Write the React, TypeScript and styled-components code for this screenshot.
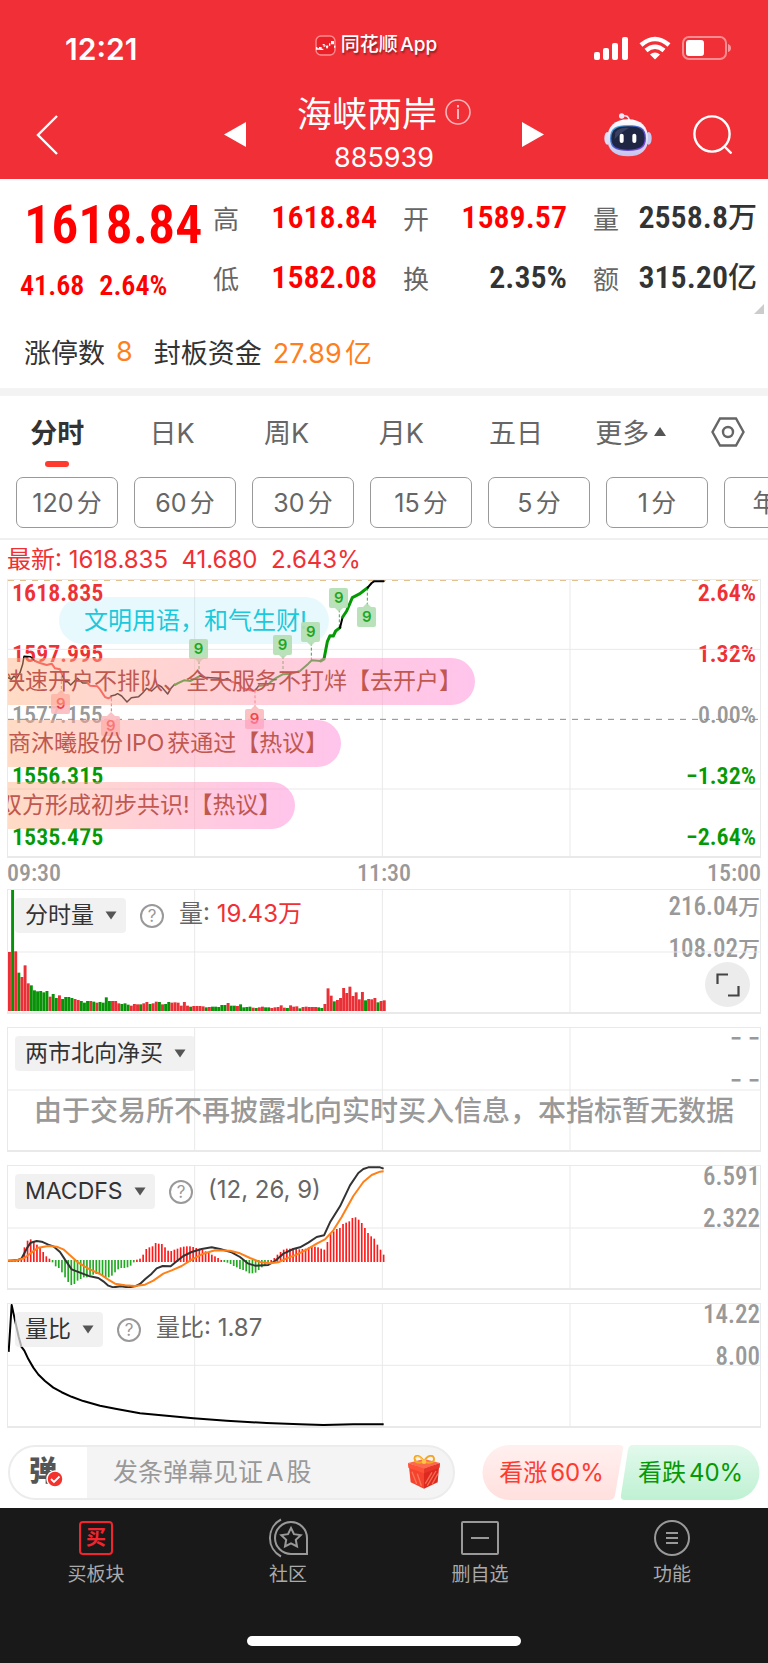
import React from 'react';
import styled, { createGlobalStyle, css } from 'styled-components';

const sans = `Inter, "Noto Sans CJK SC", sans-serif`;
const narrow = `"Roboto Condensed", "Liberation Sans Narrow", "Noto Sans CJK SC", sans-serif`;
const c = {
  brand: '#f12f37',
  up: '#f00',
  chartUp: '#ef3034',
  down: '#059a05',
  ink: '#333',
  mid: '#666',
  soft: '#999',
  line: '#e9e9e9',
  orange: '#ff7f1f',
};

const GlobalStyle = createGlobalStyle`
  * { box-sizing: border-box; }
  body { margin: 0; background: #fff; font-family: ${sans}; color: ${c.ink}; }
  button { border: 0; padding: 0; margin: 0; background: none; font: inherit; color: inherit; cursor: pointer; }
  svg { display: block; flex: none; }
`;

const autospace = css`
  text-autospace: normal;
`;

const Page = styled.div`
  display: flex;
  flex-direction: column;
  min-height: 100vh;
  overflow: hidden;
`;

/* ---------- header ---------- */
const Header = styled.header`
  background: ${c.brand};
  color: #fff;
  height: 179px;
`;
const StatusBar = styled.div`
  display: grid;
  grid-template-columns: 1fr auto 1fr;
  align-items: center;
  height: 90px;
  padding: 6px 37px 0 65px;
`;
const Clock = styled.span`
  font-size: 30px;
  font-weight: 600;
  line-height: 40px;
  padding-top: 2px;
`;
const AppName = styled.span`
  display: flex;
  align-items: center;
  gap: 5px;
  font-size: 19px;
  line-height: 24px;
  padding-bottom: 6px;
  margin-right: 44px;
  font-weight: 500;
  text-shadow: 1px 2px 2px rgba(0, 0, 0, 0.4);
  ${autospace}
`;
const StatusIcons = styled.div`
  display: flex;
  gap: 11px;
  justify-content: flex-end;
  align-items: center;
`;
const NavRow = styled.div`
  display: grid;
  grid-template-columns: 1fr 320px 1fr;
  align-items: center;
  height: 89px;
  padding: 0 36px;
`;
const BackCell = styled.div`
  display: flex;
  align-items: center;
`;
const Switcher = styled.div`
  display: flex;
  align-items: center;
  justify-content: space-between;
`;
const TitleBlock = styled.div`
  display: flex;
  flex-direction: column;
  align-items: center;
  gap: 2px;
`;
const TitleLine = styled.h1`
  display: flex;
  align-items: center;
  gap: 8px;
  margin: 0;
  font-size: 35px;
  font-weight: 400;
  line-height: 44px;
  svg { margin-top: -4px; }
`;
const Code = styled.span`
  font-size: 27px;
  line-height: 40px;
`;
const Actions = styled.div`
  display: flex;
  justify-content: flex-end;
  align-items: center;
  gap: 41px;
`;

/* ---------- quote ---------- */
const Quote = styled.section`
  display: grid;
  grid-template-columns: 205px 164px 190px 1fr;
  padding: 8px 11px 0 8px;
  position: relative;
  height: 144px;
`;
const PriceCell = styled.div`
  display: flex;
  flex-direction: column;
  padding-top: 4px;
  font-family: ${narrow};
  font-weight: 600;
  color: ${c.up};
`;
const Price = styled.span`
  font-size: 54px;
  line-height: 68px;
  padding-left: 16px;
`;
const Change = styled.span`
  display: flex;
  gap: 15px;
  font-size: 28px;
  line-height: 54px;
  padding-left: 12px;
`;
const StatColumn = styled.dl`
  display: flex;
  flex-direction: column;
  margin: 0;
  padding-left: 26px;
  &:first-of-type { padding-left: 0; }
`;
const Stat = styled.div`
  display: flex;
  justify-content: space-between;
  align-items: center;
  height: 60px;
`;
const StatLabel = styled.dt`
  font-size: 26px;
  color: ${c.mid};
`;
const StatValue = styled.dd<{ $up?: boolean }>`
  margin: 0;
  font-family: ${narrow};
  font-size: 32px;
  line-height: 40px;
  font-weight: 600;
  color: ${(p) => (p.$up ? c.up : c.ink)};
`;
const Unit = styled.span<{ $size: number }>`
  font-family: "Noto Sans CJK SC", sans-serif;
  font-size: ${(p) => p.$size}px;
  font-weight: 500;
  line-height: 1;
`;
const Corner = styled.i`
  position: absolute;
  right: 4px;
  bottom: 9px;
  border-left: 10px solid transparent;
  border-bottom: 10px solid #ccc;
`;
const LimitRow = styled.div`
  display: flex;
  align-items: center;
  height: 73px;
  padding: 0 24px 8px;
  margin-bottom: -8px;
  font-size: 27px;
  border-bottom: 8px solid #f3f3f3;
  gap: 11px;
  ${autospace}
  & > span:nth-child(2) { margin-right: 10px; }
`;
const Orange = styled.span`
  color: ${c.orange};
`;

/* ---------- tabs ---------- */
const Tabs = styled.nav`
  display: grid;
  grid-template-columns: repeat(6, 1fr) 80px;
  align-items: start;
  height: 73px;
  margin-top: 8px;
`;
const Tab = styled.button<{ $active?: boolean }>`
  display: flex;
  justify-content: center;
  align-items: center;
  gap: 5px;
  position: relative;
  height: 71px;
  font-size: 27px;
  color: ${(p) => (p.$active ? c.ink : c.mid)};
  font-weight: ${(p) => (p.$active ? 700 : 400)};
  ${(p) => p.$active && css`
    &::after {
      content: '';
      position: absolute;
      left: calc(50% - 12px);
      bottom: 0;
      width: 24px;
      height: 6px;
      border-radius: 3px;
      background: #ff3b30;
    }
  `}
`;
const Chips = styled.div`
  display: flex;
  gap: 16px;
  padding: 8px 0 10px 16px;
  overflow: hidden;
  border-bottom: 2px solid #f0f0f0;
`;
const Chip = styled.button`
  flex: none;
  width: 102px;
  height: 51px;
  padding-bottom: 3px;
  border: 1px solid #999;
  border-radius: 7px;
  font-size: 25px;
  color: ${c.mid};
  ${autospace}
`;

/* ---------- charts ---------- */
const Charts = styled.main`
  padding: 0 7px;
`;
const Latest = styled.p`
  margin: 0;
  height: 39px;
  font-size: 24px;
  line-height: 40px;
  color: ${c.chartUp};
  white-space: pre;
`;
const Panel = styled.section<{ $main?: boolean }>`
  position: relative;
  height: ${(p) => (p.$main ? 279 : 125)}px;
  border: 1px solid ${c.line};
  border-bottom-width: 2px;
  overflow: hidden;
  & + & { margin-top: 13px; }
`;
const Plot = styled.svg`
  position: absolute;
  inset: 0;
  width: 100%;
  height: 100%;
  & * { vector-effect: non-scaling-stroke; }
`;
const Axis = styled.ul<{ $right?: boolean; $top?: number; $step: number }>`
  position: absolute;
  top: ${(p) => p.$top ?? 0}px;
  ${(p) => (p.$right ? 'right: 0; text-align: right;' : 'left: 0;')}
  margin: 0;
  padding: 0;
  list-style: none;
  font-family: ${narrow};
  font-size: 25px;
  font-weight: 500;
  line-height: ${(p) => p.$step}px;
  color: ${c.soft};
`;
const Tick = styled.li<{ $tone: 'up' | 'flat' | 'down' }>`
  padding: 0 4px;
  font-size: 24px;
  font-weight: ${(p) => (p.$tone === 'flat' ? 500 : 600)};
  color: ${(p) => ({ up: c.chartUp, flat: c.soft, down: c.down })[p.$tone]};
`;
const TimeRow = styled.div`
  display: flex;
  justify-content: space-between;
  height: 31px;
  font-family: ${narrow};
  font-size: 24px;
  font-weight: 500;
  line-height: 31px;
  color: ${c.soft};
`;
const Marker = styled.span<{ $green?: boolean; $above?: boolean }>`
  position: absolute;
  width: 19px;
  height: 20px;
  margin: -10px 0 0 -10px;
  border-radius: 2px;
  font-size: 15px;
  font-weight: 600;
  line-height: 20px;
  text-align: center;
  color: ${(p) => (p.$green ? '#0a9d0a' : '#f3323a')};
  background: ${(p) => (p.$green ? '#b3dfb3' : '#fbbcbf')};
  opacity: 0.9;
  &::after {
    content: '';
    position: absolute;
    left: 6px;
    ${(p) => (p.$above ? 'bottom: 100%; border-bottom: 4px solid;' : 'top: 100%; border-top: 4px solid;')}
    border-left: 4px solid transparent;
    border-right: 4px solid transparent;
    border-top-color: ${(p) => (p.$above ? 'transparent' : p.$green ? '#b3dfb3' : '#fbbcbf')};
    border-bottom-color: ${(p) => (p.$green ? '#b3dfb3' : '#fbbcbf')};
  }
`;
const Barrage = styled.div`
  position: absolute;
  top: 78px;
  left: 0;
  display: flex;
  flex-direction: column;
  align-items: flex-start;
  gap: 15px;
`;
const Bullet = styled.a<{ $shift?: number }>`
  height: 47px;
  padding-right: 13px;
  border-radius: 0 24px 24px 0;
  background: linear-gradient(90deg, rgba(255, 178, 130, 0.46), rgba(255, 150, 220, 0.56));
  color: #c05850;
  font-size: 23px;
  line-height: 47px;
  text-decoration: none;
  white-space: pre;
  text-indent: ${(p) => p.$shift ?? 0}px;
  ${autospace}
`;
const Notice = styled.div`
  position: absolute;
  left: 51px;
  top: 17px;
  width: 270px;
  height: 47px;
  padding-left: 25px;
  border-radius: 24px;
  background: rgba(20, 200, 225, 0.1);
  color: #1ac9dc;
  font-size: 24px;
  line-height: 47px;
  white-space: nowrap;
`;
const PanelHead = styled.div`
  position: absolute;
  left: 7px;
  top: 8px;
  display: flex;
  align-items: center;
  height: 35px;
  font-size: 24px;
  line-height: 32px;
  color: ${c.mid};
  white-space: pre;
  & > span { padding-bottom: 4px; }
`;
const Picker = styled.label`
  position: relative;
  display: flex;
  align-items: center;
  height: 35px;
  margin-right: 14px;
  border-radius: 4px;
  background: rgba(236, 236, 236, 0.72);
  svg { position: absolute; right: 9px; pointer-events: none; }
`;
const PickerSelect = styled.select`
  appearance: none;
  border: 0;
  margin: 0;
  height: 35px;
  padding: 0 32px 2px 10px;
  background: none;
  font-family: ${sans};
  font-size: 23px;
  color: ${c.ink};
`;
const HelpButton = styled.button`
  display: flex;
  align-items: center;
  justify-content: center;
  width: 24px;
  height: 24px;
  border: 2px solid ${c.soft};
  border-radius: 50%;
  margin-right: 15px;
  font-size: 17px;
  line-height: 20px;
  color: ${c.soft};
`;
const Red = styled.span`
  color: ${c.chartUp};
`;
const Empty = styled.p`
  position: absolute;
  left: 0;
  right: 0;
  top: 62px;
  margin: 0;
  text-align: center;
  font-size: 28px;
  line-height: 42px;
  color: ${c.soft};
  font-weight: 500;
  white-space: nowrap;
`;
const Expand = styled.button`
  position: absolute;
  right: 10px;
  bottom: 5px;
  display: flex;
  align-items: center;
  justify-content: center;
  width: 45px;
  height: 45px;
  border-radius: 50%;
  background: #ececec;
`;

/* ---------- comment bar ---------- */
const CommentBar = styled.div`
  display: flex;
  align-items: center;
  justify-content: space-between;
  gap: 27px;
  height: 80px;
  padding: 8px 8px 0;
`;
const Composer = styled.form`
  display: flex;
  align-items: center;
  flex: 1;
  height: 55px;
  padding-right: 13px;
  border: 2px solid #ececec;
  border-radius: 28px;
  background: #f4f4f4;
  overflow: hidden;
`;
const BarrageToggle = styled.button`
  position: relative;
  width: 77px;
  height: 51px;
  background: #fff;
  font-size: 28px;
  font-weight: 900;
  color: #555;
  text-align: left;
  padding: 0 0 6px 19px;
  svg { position: absolute; left: 36px; top: 23px; }
`;
const CommentInput = styled.input`
  flex: 1;
  min-width: 0;
  border: 0;
  padding: 0 0 0 26px;
  background: none;
  font-family: ${sans};
  font-size: 25px;
  color: ${c.ink};
  ${autospace}
  &::placeholder { color: ${c.soft}; opacity: 1; }
`;
const Votes = styled.div`
  display: flex;
  width: 278px;
`;
const Vote = styled.button<{ $rise?: boolean }>`
  position: relative;
  flex: 1;
  height: 55px;
  padding-bottom: 3px;
  font-size: 24px;
  color: ${(p) => (p.$rise ? '#ff3b30' : c.down)};
  ${autospace}
  svg { position: absolute; inset: 0; width: 100%; overflow: visible; }
  span { position: relative; }
`;

/* ---------- bottom nav ---------- */
const Footer = styled.footer`
  flex: 1;
  display: flex;
  flex-direction: column;
  justify-content: space-between;
  align-items: center;
  min-height: 155px;
  padding-bottom: 17px;
  background: #191919;
`;
const FooterItems = styled.nav`
  display: grid;
  grid-template-columns: repeat(4, 1fr);
  width: 100%;
  padding-top: 10px;
`;
const FooterItem = styled.button`
  display: flex;
  flex-direction: column;
  align-items: center;
  gap: 3px;
  font-size: 19px;
  line-height: 28px;
  color: #aaa;
`;
const BuyIcon = styled.span`
  display: flex;
  align-items: center;
  justify-content: center;
  width: 34px;
  height: 34px;
  margin: 3px 0;
  border: 2px solid #f4242e;
  border-radius: 4px;
  color: #f4242e;
  font-size: 20px;
  font-weight: 700;
  line-height: 28px;
`;
const HomeBar = styled.i`
  width: 274px;
  height: 10px;
  border-radius: 5px;
  background: #fff;
`;

/* ---------- data ---------- */
const priceSegments: { color: string; width: number; points: string }[] = [
  { color: '#000', width: 1.5, points: '24,350 34,355 42,345 50,352 60,335 68,310 72,286 92,287 105,300' },
  { color: '#f5333a', width: 2, points: '105,300 120,306 140,312 155,308 165,322 180,325 188,345' },
  { color: '#000', width: 1.5, points: '188,345 195,362 203,362 212,372 232,352 248,366 262,366' },
  { color: '#f5333a', width: 2, points: '262,366 270,374 292,376 300,385 315,408 325,412 333,408' },
  { color: '#000', width: 1.5, points: '333,405 345,402 353,398 365,405 381,423 394,410 416,407 428,396 440,382 455,390 475,372 485,378 503,399 513,382 524,370' },
  { color: '#059a05', width: 2, points: '524,372 535,366 552,358 572,360 590,350 600,345' },
  { color: '#000', width: 1.5, points: '600,345 612,349 632,350 660,352 668,358 682,352 695,362' },
  { color: '#f5333a', width: 2, points: '695,362 708,366 715,365 725,380 740,385 762,390 768,385' },
  { color: '#000', width: 1.5, points: '768,385 778,372' },
  { color: '#059a05', width: 2, points: '778,374 803,372 813,362 830,350 848,340 875,338 900,330 925,308 935,298 962,300' },
  { color: '#059a05', width: 3, points: '962,300 972,294 982,242 990,224 1000,225 1007,210 1020,200' },
  { color: '#000', width: 2, points: '1020,200 1028,168' },
  { color: '#059a05', width: 3, points: '1028,168 1040,150 1057,110 1080,98 1090,90 1103,80' },
  { color: '#000', width: 2, points: '1103,80 1115,66 1122,61 1151,61' },
];

const markers: { x: number; y: number; green?: boolean; above?: boolean; stem: [number, number] }[] = [
  { x: 597, y: 265, green: true, stem: [300, 343] },
  { x: 849, y: 251, green: true, stem: [285, 340] },
  { x: 934, y: 212, green: true, stem: [245, 298] },
  { x: 1018, y: 111, green: true, stem: [145, 200] },
  { x: 1102, y: 169, green: true, above: true, stem: [80, 135] },
  { x: 184, y: 428, above: true, stem: [345, 395] },
  { x: 334, y: 494, above: true, stem: [412, 458] },
  { x: 765, y: 474, above: true, stem: [388, 438] },
];

// Positive bars are buying minutes, negative ones are selling minutes.
const volume = [
  177, -363, 179, -115, 102, 137, 83, -77, -62, -59, -60, -56, -60, 43, -51, -39, 47, -36, -42, -42, -39, 36, 33, -30,
  -25, -30, 30, -28, 25, -27, -25, -41, -30, 30, 30, 23, -21, -23, -19, 16, 21, 20, -20, 23, 27, -21, 23, 28, -27, 20,
  -21, -27, 25, 26, 25, 16, 27, 16, -13, 15, 15, 15, 14, -11, 12, -13, -13, -12, -18, -18, 24, -16, -16, 15, -20, -11,
  -12, -13, 10, -9, 11, 13, -11, -11, 9, 11, 12, 17, 10, -9, 17, 13, 14, -8, 12, 13, 12, 12, 12, -11, -9, 21, 68, 46,
  -29, 33, 39, 69, 54, 73, 45, 56, 35, 57, -32, 36, 35, 39, -26, 30, 32,
];

const macd = [
  3, -4, 3, 4, 8, 42, 62, 66, 58, 50, 40, 28, 15, 8, -5, -17, -22, -35, -50, -64, -73, -70, -60, -55, -50, -50, -44,
  -42, -40, -38, -45, -50, -50, -45, -35, -26, -22, -22, -20, -15, -5, 5, 8, 20, 37, 42, 45, 55, 53, 52, 42, 32, 31,
  35, 38, 42, 44, 45, 45, 43, 40, 38, 34, 30, 26, 20, 15, 10, 4, -4, -6, -10, -16, -20, -25, -28, -32, -38, -38, -36,
  -28, -20, -14, -8, 4, 10, 20, 28, 35, 38, 38, 39, 38, 36, 37, 38, 42, 45, 44, 42, 38, 35, 58, 82, 90, 97, 100, 112,
  116, 120, 130, 132, 125, 115, 100, 85, 75, 68, 50, 35, 20,
];

const stats: [string, string, string?, boolean?][][] = [
  [['高', '1618.84', '', true], ['低', '1582.08', '', true]],
  [['开', '1589.57', '', true], ['换', '2.35%']],
  [['量', '2558.8', '万'], ['额', '315.20', '亿']],
];

const GridLines = ({ top, bottom, rows }: { top: number; bottom: number; rows: number[] }) => (
  <g stroke={c.line} strokeWidth="1">
    {[584, 1147, 1710].map((x) => <line key={x} x1={x} x2={x} y1={top} y2={bottom} />)}
    {rows.map((y) => <line key={y} x1="24" x2="2280" y1={y} y2={y} />)}
  </g>
);

const DownArrow = () => (
  <svg width="12" height="9" viewBox="0 0 12 9"><path d="M0.5 0.5h11L6 8.5z" fill="#555" /></svg>
);

const Head = ({ name, children }: { name: string; children?: React.ReactNode }) => (
  <PanelHead>
    <Picker>
      <PickerSelect aria-label="指标" defaultValue={name}><option>{name}</option></PickerSelect>
      <DownArrow />
    </Picker>
    {children && <HelpButton aria-label="指标说明">?</HelpButton>}
    {children}
  </PanelHead>
);

const Robot = () => (
  <svg width="48" height="44" viewBox="0 0 144 132">
    <defs>
      <linearGradient id="shell" x1="0" y1="0" x2="0" y2="1">
        <stop offset="0" stopColor="#fff" /><stop offset="1" stopColor="#c5c3ee" />
      </linearGradient>
      <linearGradient id="visor" x1="0" y1="0" x2="1" y2="1">
        <stop offset="0" stopColor="#48b9e8" /><stop offset="0.5" stopColor="#4a55c8" /><stop offset="1" stopColor="#8d3fe0" />
      </linearGradient>
    </defs>
    <path d="M56 9 q18 -4 20 14" fill="none" stroke="#e4e3f8" strokeWidth="5" />
    <circle cx="53" cy="9" r="8" fill="#e9e8fa" />
    <ellipse cx="10" cy="76" rx="9" ry="19" fill="#dcdcf5" />
    <ellipse cx="134" cy="76" rx="9" ry="19" fill="#c9c8ef" />
    <path d="M72 19 C112 19 132 42 132 76 C132 112 112 130 72 130 C32 130 10 112 10 76 C10 42 32 19 72 19z" fill="url(#shell)" />
    <path d="M72 37 C108 37 126 44 126 76 C126 106 108 114 72 114 C36 114 18 106 18 76 C18 44 36 37 72 37z" fill="url(#visor)" />
    <path d="M72 40 C104 40 122 48 122 76 C122 103 104 110 72 110 C40 110 22 103 22 76 C22 48 40 40 72 40z" fill="#1e2644" />
    <path d="M34 58 C44 44 60 44 76 44 C62 52 46 62 32 78z" fill="#4a5474" opacity="0.6" />
    <rect x="47" y="62" width="12" height="28" rx="6" fill="#fff" />
    <rect x="85" y="62" width="12" height="28" rx="6" fill="#fff" />
  </svg>
);

const Gift = () => (
  <svg width="32" height="34" viewBox="0 0 96 102">
    <path d="M2 26 L48 38 L48 101 L8 82z" fill="#f4442f" />
    <path d="M94 26 L48 38 L48 101 L89 82z" fill="#dd2a20" />
    <path d="M0 24 L48 12 L96 24 L48 42z" fill="#fb6a4c" />
    <path d="M0 24 L48 42 L48 55 L1 38z" fill="#ff5238" />
    <path d="M96 24 L48 42 L48 55 L95 38z" fill="#e9362a" />
    <path d="M12 50l14 36M28 56l12 36M84 48l-26 44M90 56l-18 32M72 52l-20 34" stroke="#ff8a68" strokeWidth="4" opacity="0.7" />
    <path d="M48 20 C34 -4 18 0 20 12 C22 26 38 24 48 20 C58 24 78 26 78 12 C78 0 60 -4 48 20z" fill="none" stroke="#f5a623" strokeWidth="6" />
    <path d="M48 20 C36 2 22 2 23 12" fill="none" stroke="#ffd978" strokeWidth="3" />
    <circle cx="48" cy="20" r="7" fill="#ffc24a" />
  </svg>
);

export default function App() {
  return (
    <>
      <GlobalStyle />
      <Page>
        <Header>
          <StatusBar>
            <Clock>12:21</Clock>
            <AppName>
              <svg width="21" height="21" viewBox="0 0 63 63">
                <rect x="3" y="3" width="57" height="57" rx="15" fill="#ea1f28" stroke="#ff8d90" strokeWidth="4" />
                <path d="M5 36v6h9v-6M18 36v7h7" fill="none" stroke="#fff" strokeWidth="4" />
                <path d="M23 27h6v9h-3v-5h-3zM31 30l5 3 3-3 1 6-4 6-3-5zM42 25h4v7h-4zM48 18h9v10h-9zM57 32h4v6h-4z" fill="#fff" />
              </svg>
              同花顺App
            </AppName>
            <StatusIcons>
              <svg width="34" height="23" viewBox="0 0 34 23" fill="#fff">
                <rect y="15" width="6" height="8" rx="2" /><rect x="9" y="11" width="6" height="12" rx="2" />
                <rect x="18" y="6" width="6" height="17" rx="2" /><rect x="28" y="0" width="6" height="23" rx="2" />
              </svg>
              <svg width="32" height="24" viewBox="0 0 32 24" fill="none" stroke="#fff" strokeWidth="4.5">
                <path d="M2 9 Q16 -3 30 9" /><path d="M7 14.5 Q16 7 25 14.5" />
                <path d="M16 23.5 L11 18.5 Q16 14.5 21 18.5z" fill="#fff" stroke="none" />
              </svg>
              <svg width="49" height="24" viewBox="0 0 49 24">
                <rect x="1" y="1" width="43" height="22" rx="6" fill="none" stroke="#fff" strokeOpacity="0.45" strokeWidth="2" />
                <rect x="4" y="4" width="18" height="16" rx="3" fill="#fff" />
                <path d="M46 8 q3 1 3 4 t-3 4z" fill="#fff" fillOpacity="0.5" />
              </svg>
            </StatusIcons>
          </StatusBar>
          <NavRow>
            <BackCell>
              <button aria-label="返回">
                <svg width="22" height="40" viewBox="0 0 22 40" fill="none" stroke="#fff" strokeWidth="2.4"><path d="M21 1L2 20l19 19" /></svg>
              </button>
            </BackCell>
            <Switcher>
              <button aria-label="上一个"><svg width="22" height="25" viewBox="0 0 22 25"><path d="M22 0v25L0 12.5z" fill="#fff" /></svg></button>
              <TitleBlock>
                <TitleLine>
                  海峡两岸
                  <svg width="26" height="26" viewBox="0 0 26 26" fill="none" stroke="#fff" strokeOpacity="0.65">
                    <circle cx="13" cy="13" r="12" strokeWidth="1.6" />
                    <path d="M13 10v10M13 6v2.5" strokeWidth="2" />
                  </svg>
                </TitleLine>
                <Code>885939</Code>
              </TitleBlock>
              <button aria-label="下一个"><svg width="22" height="25" viewBox="0 0 22 25"><path d="M0 0v25L22 12.5z" fill="#fff" /></svg></button>
            </Switcher>
            <Actions>
              <button aria-label="智能助手"><Robot /></button>
              <button aria-label="搜索">
                <svg width="39" height="39" viewBox="0 0 39 39" fill="none" stroke="#fff" strokeWidth="2.4">
                  <circle cx="19" cy="19" r="17.6" /><path d="M31 31l7.5 7.5" />
                </svg>
              </button>
            </Actions>
          </NavRow>
        </Header>

        <Quote>
          <PriceCell>
            <Price>1618.84</Price>
            <Change><span>41.68</span><span>2.64%</span></Change>
          </PriceCell>
          {stats.map((column, i) => (
            <StatColumn key={i}>
              {column.map(([label, value, unit, up]) => (
                <Stat key={label}>
                  <StatLabel>{label}</StatLabel>
                  <StatValue $up={up}>{value}{unit && <Unit $size={29}>{unit}</Unit>}</StatValue>
                </Stat>
              ))}
            </StatColumn>
          ))}
          <Corner />
        </Quote>
        <LimitRow>
          <span>涨停数</span><Orange>8</Orange>
          <span>封板资金</span><Orange>27.89亿</Orange>
        </LimitRow>

        <Tabs>
          <Tab $active>分时</Tab>
          <Tab>日K</Tab>
          <Tab>周K</Tab>
          <Tab>月K</Tab>
          <Tab>五日</Tab>
          <Tab>更多<svg width="12" height="9" viewBox="0 0 12 9"><path d="M0 9h12L6 0z" fill="#555" /></svg></Tab>
          <Tab aria-label="设置">
            <svg width="34" height="30" viewBox="0 0 34 30" fill="none" stroke="#666" strokeWidth="2.4">
              <path d="M9 1.5h16L32.5 15 25 28.5H9L1.5 15z" /><circle cx="17" cy="15" r="5" />
            </svg>
          </Tab>
        </Tabs>
        <Chips>
          {['120分', '60分', '30分', '15分', '5分', '1分', '年K'].map((t) => <Chip key={t}>{t}</Chip>)}
        </Chips>

        <Charts>
          <Latest>最新: 1618.835  41.680  2.643%</Latest>
          <Panel $main>
            <Axis $step={61} $top={-17}>
              <Tick $tone="up">1618.835</Tick>
              <Tick $tone="up">1597.995</Tick>
              <Tick $tone="flat">1577.155</Tick>
              <Tick $tone="down">1556.315</Tick>
              <Tick $tone="down">1535.475</Tick>
            </Axis>
            <Axis $right $step={61} $top={-17}>
              <Tick $tone="up">2.64%</Tick>
              <Tick $tone="up">1.32%</Tick>
              <Tick $tone="flat">0.00%</Tick>
              <Tick $tone="down">−1.32%</Tick>
              <Tick $tone="down">−2.64%</Tick>
            </Axis>
            <Plot viewBox="24 57 2256 828" preserveAspectRatio="none">
              <GridLines top={57} bottom={891} rows={[265, 684]} />
              <line x1="24" x2="2280" y1="58.5" y2="58.5" stroke="#e3c090" strokeWidth="1" strokeDasharray="6 6" />
              <line x1="24" x2="2280" y1="475" y2="475" stroke="#888" strokeWidth="1" strokeDasharray="6 6" />
              {markers.map((m) => (
                <line key={m.x} x1={m.x} x2={m.x} y1={m.stem[0]} y2={m.stem[1]} stroke={m.green ? '#3aa83a' : '#f5676c'} strokeWidth="1" strokeDasharray="3 2" />
              ))}
              {priceSegments.map((s) => (
                <polyline key={s.points} points={s.points} fill="none" stroke={s.color} strokeWidth={s.width} strokeLinejoin="round" strokeLinecap="round" />
              ))}
            </Plot>
            <Notice>文明用语，和气生财!</Notice>
            {markers.map((m) => (
              <Marker key={m.x} $green={m.green} $above={m.above} style={{ left: `${(m.x - 24) / 22.56}%`, top: `${(m.y - 57) / 3}px` }}>9</Marker>
            ))}
            <Barrage>
              <Bullet href="#open" $shift={-6}>快速开户不排队、全天服务不打烊【去开户】</Bullet>
              <Bullet href="#ipo">商沐曦股份IPO获通过【热议】</Bullet>
              <Bullet href="#talks" $shift={-9}>双方形成初步共识!【热议】</Bullet>
            </Barrage>
          </Panel>
          <TimeRow><span>09:30</span><span>11:30</span><span>15:00</span></TimeRow>

          <Panel>
            <Axis $right $step={42} $top={-4}>
              <li>216.04<Unit $size={22}>万</Unit></li>
              <li>108.02<Unit $size={22}>万</Unit></li>
            </Axis>
            <Plot viewBox="24 30 2256 366" preserveAspectRatio="none">
              <GridLines top={30} bottom={402} rows={[216]} />
            </Plot>
            <Head name="分时量">
              <span>量: <Red>19.43万</Red></span>
            </Head>
            <Plot viewBox="24 30 2256 366" preserveAspectRatio="none">
              {volume.map((v, i) => (
                <rect key={i} x={24 + i * 9.37} y={393 - Math.abs(v)} width="8.8" height={Math.abs(v)} fill={v > 0 ? '#ea3036' : '#089208'} />
              ))}
            </Plot>
            <Expand aria-label="全屏">
              <svg width="24" height="24" viewBox="0 0 24 24" fill="none" stroke="#444" strokeWidth="2.2"><path d="M1.5 11V1.5H12M22.5 13v9.5H12" /></svg>
            </Expand>
          </Panel>

          <Panel>
            <Axis $right $step={42} $top={-10}><li>− −</li><li>− −</li></Axis>
            <Plot viewBox="24 30 2256 366" preserveAspectRatio="none">
              <GridLines top={30} bottom={402} rows={[216]} />
            </Plot>
            <Head name="两市北向净买" />
            <Empty>由于交易所不再披露北向实时买入信息，本指标暂无数据</Empty>
          </Panel>

          <Panel>
            <Axis $right $step={42} $top={-10}><li>6.591</li><li>2.322</li></Axis>
            <Plot viewBox="24 47 2256 366" preserveAspectRatio="none">
              <GridLines top={47} bottom={419} rows={[233]} />
              {macd.map((v, i) => (
                <rect key={i} x={24 + i * 9.37} y={v > 0 ? 333 - v : 329} width="5" height={Math.abs(v) + 2} fill={v > 0 ? '#ff1a1a' : '#22aa22'} />
              ))}
              <polyline fill="none" stroke="#333" strokeWidth="2" strokeLinejoin="round" points="24,331 50,330 65,324 80,295 92,277 110,272 125,274 145,283 160,288 180,305 195,328 215,357 240,367 270,378 295,383 310,393 325,406 340,411 362,408 385,411 405,408 420,401 435,387 455,370 470,354 488,347 512,348 530,333 550,317 575,305 605,296 635,291 660,296 695,306 720,320 745,340 765,346 805,344 825,332 850,310 880,296 900,291 925,277 950,260 972,255 990,216 1020,168 1050,105 1075,68 1090,56 1105,51 1140,51 1151,55" />
              <polyline fill="none" stroke="#ff8018" strokeWidth="2" strokeLinejoin="round" points="24,331 45,331 72,324 90,310 115,292 145,287 170,289 190,297 210,315 235,337 265,355 300,371 325,388 345,400 375,405 405,407 435,403 460,391 490,370 515,360 545,347 575,328 610,310 645,300 690,301 720,309 750,323 780,335 810,339 835,336 860,324 890,313 920,298 950,280 975,267 1000,240 1025,200 1060,137 1090,95 1115,74 1140,64 1151,63" />
            </Plot>
            <Head name="MACDFS"><span>(12, 26, 9)</span></Head>
          </Panel>

          <Panel>
            <Axis $right $step={42} $top={-10}><li>14.22</li><li>8.00</li></Axis>
            <Plot viewBox="24 460 2256 372" preserveAspectRatio="none">
              <GridLines top={460} bottom={832} rows={[647]} />
              <polyline fill="none" stroke="#000" strokeWidth="2" strokeLinejoin="round" points="26,606 35,463 45,510 56,560 64,590 73,602 85,628 100,654 115,675 135,695 160,715 185,729 215,743 250,756 300,770 350,780 420,793 500,801 580,808 680,816 800,823 900,827 970,829 1060,827 1151,827" />
            </Plot>
            <Head name="量比"><span>量比: 1.87</span></Head>
          </Panel>
        </Charts>

        <CommentBar>
          <Composer onSubmit={(e) => e.preventDefault()}>
            <BarrageToggle type="button" aria-label="弹幕开关">
              弹
              <svg width="18" height="18" viewBox="0 0 18 18">
                <circle cx="9" cy="9" r="8" fill="#f5332e" stroke="#fff" strokeWidth="1.5" />
                <path d="M5 9l3 3 5.5-5.5" fill="none" stroke="#fff" strokeWidth="1.8" />
              </svg>
            </BarrageToggle>
            <CommentInput aria-label="发条弹幕" placeholder="发条弹幕见证A股" />
            <button type="button" aria-label="礼物"><Gift /></button>
          </Composer>
          <Votes>
            <Vote $rise>
              <svg height="55" viewBox="0 0 140 55" preserveAspectRatio="none">
                <defs><linearGradient id="rise" x1="0" y1="0" x2="0" y2="1"><stop offset="0" stopColor="#fff0ef" /><stop offset="1" stopColor="#ffe0de" /></linearGradient></defs>
                <path d="M28 0H138q5 0 4 4L134 50q-1 5 -6 5H28A27.5 27.5 0 0 1 28 0z" fill="url(#rise)" />
              </svg>
              <span>看涨60%</span>
            </Vote>
            <Vote>
              <svg height="55" viewBox="0 0 140 55" preserveAspectRatio="none">
                <defs><linearGradient id="fall" x1="0" y1="0" x2="0" y2="1"><stop offset="0" stopColor="#e2f9ec" /><stop offset="1" stopColor="#bff1d3" /></linearGradient></defs>
                <path d="M12 0H112a27.5 27.5 0 0 1 0 55H4q-5 0 -4 -5L7 5q1 -5 5 -5z" fill="url(#fall)" />
              </svg>
              <span>看跌40%</span>
            </Vote>
          </Votes>
        </CommentBar>

        <Footer>
          <FooterItems>
            <FooterItem><BuyIcon>买</BuyIcon>买板块</FooterItem>
            <FooterItem>
              <svg width="40" height="40" viewBox="0 0 40 40" fill="none" stroke="#999" strokeWidth="2">
                <path d="M13 1.5A21 21 0 0 0 13 38.5" />
                <path d="M39 36V20A16 16 0 1 0 23 36z" />
                <path d="M23 10l3 6.2 6.7.9-4.9 4.7 1.2 6.7-6-3.200-6 3.200 1.200-6.700-4.900-4.700 6.700-.9z" />
              </svg>
              社区
            </FooterItem>
            <FooterItem>
              <svg width="40" height="40" viewBox="0 0 40 40" fill="none" stroke="#999" strokeWidth="2">
                <rect x="2" y="4" width="36" height="32" rx="1" /><path d="M11 20h18" />
              </svg>
              删自选
            </FooterItem>
            <FooterItem>
              <svg width="40" height="40" viewBox="0 0 40 40" fill="none" stroke="#999" strokeWidth="2">
                <circle cx="20" cy="20" r="17" /><path d="M14 15h12M14 20h12M14 25h12" />
              </svg>
              功能
            </FooterItem>
          </FooterItems>
          <HomeBar />
        </Footer>
      </Page>
    </>
  );
}
